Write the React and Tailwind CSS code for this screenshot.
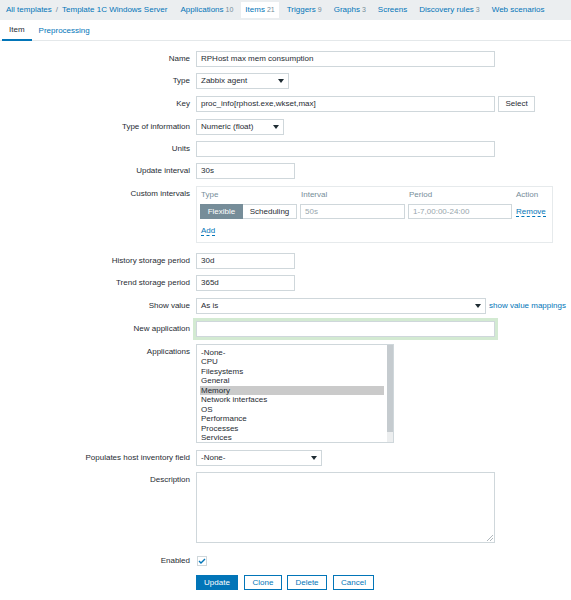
import React from 'react';

const navItems = [
  { label: 'Applications', count: '10' },
  { label: 'Items', count: '21', active: true },
  { label: 'Triggers', count: '9' },
  { label: 'Graphs', count: '3' },
  { label: 'Screens' },
  { label: 'Discovery rules', count: '3' },
  { label: 'Web scenarios' },
];

const apps = [
  '-None-',
  'CPU',
  'Filesystems',
  'General',
  'Memory',
  'Network interfaces',
  'OS',
  'Performance',
  'Processes',
  'Services',
];

function Caret() {
  return (
    <svg width="6" height="4" viewBox="0 0 6 4" className="shrink-0">
      <path d="M0 0h6L3 4z" fill="#1f2c33" />
    </svg>
  );
}

function Field({ className = '', children, muted }) {
  return (
    <div
      className={`flex h-[16px] items-center border border-[#cfd7db] bg-white pl-[4px] ${
        muted ? 'text-[#98a6ad]' : 'text-[#1f2c33]'
      } ${className}`}
    >
      {children}
    </div>
  );
}

function Select({ className = '', children }) {
  return (
    <div
      className={`flex h-[16px] items-center justify-between border border-[#cfd7db] bg-white pl-[4px] pr-[4px] text-[#1f2c33] ${className}`}
    >
      <span>{children}</span>
      <Caret />
    </div>
  );
}

function Row({ label, className = '', top, children }) {
  return (
    <div className={`flex ${className}`}>
      <div
        className={`w-[190px] shrink-0 text-right text-[#1f2c33] ${
          top ? top : 'flex h-[16px] items-center justify-end'
        }`}
      >
        {label}
      </div>
      <div className="ml-[6px] flex items-start">{children}</div>
    </div>
  );
}

export default function App() {
  return (
    <div className="h-[600px] w-[571px] overflow-hidden bg-white text-[8px] font-['Liberation_Sans',Arial,sans-serif] text-[#1f2c33]">
      {/* header navigation */}
      <div className="flex h-[20px] items-center bg-[#ebeef0] pl-[6px]">
        <span className="text-[#0275b8]">All templates</span>
        <span className="mx-[4px] text-[#768d99]">/</span>
        <span className="text-[#0275b8]">Template 1C Windows Server</span>
        <div className="ml-[9px] flex items-center gap-[4px]">
          {navItems.map((n) => (
            <div
              key={n.label}
              className={`flex h-[16px] items-center px-[4px] ${n.active ? 'bg-white' : ''}`}
            >
              <span className="text-[#0275b8]">{n.label}</span>
              {n.count && <span className="ml-[2px] text-[7px] text-[#768d99]">{n.count}</span>}
            </div>
          ))}
        </div>
      </div>

      {/* tabs */}
      <div className="flex h-[21px] border-b border-[#e4e8ea] pl-[2px]">
        <div className="-mb-px flex items-center border-b-2 border-[#0275b8] px-[7px] pt-[1px] text-[#1f2c33]">
          Item
        </div>
        <div className="flex items-center px-[7px] pt-[1px] text-[#0275b8]">Preprocessing</div>
      </div>

      {/* form */}
      <div className="pt-[10px]">
        <Row label="Name">
          <Field className="w-[299px]">RPHost max mem consumption</Field>
        </Row>
        <Row label="Type" className="mt-[6px]">
          <Select className="w-[93px]">Zabbix agent</Select>
        </Row>
        <Row label="Key" className="mt-[7px]">
          <Field className="w-[299px]">proc_info[rphost.exe,wkset,max]</Field>
          <div className="ml-[3px] flex h-[16px] w-[37px] items-center justify-center border border-[#cfd7db] bg-white text-[#1f2c33]">
            Select
          </div>
        </Row>
        <Row label="Type of information" className="mt-[7px]">
          <Select className="w-[88px]">Numeric (float)</Select>
        </Row>
        <Row label="Units" className="mt-[6px]">
          <Field className="w-[299px]" />
        </Row>
        <Row label="Update interval" className="mt-[6px]">
          <Field className="w-[99px]">30s</Field>
        </Row>
        <Row label="Custom intervals" className="mt-[7px]" top="pt-[2px] leading-[12px]">
          <div className="w-[357px] border border-[#e6eaec] pb-[5px] pl-[3px] pr-[3px] pt-[2px]">
            <div className="grid h-[12px] grid-cols-[97px_105px_104px_1fr] gap-x-[3px] leading-[12px] text-[#768d99]">
              <span className="pl-[1px]">Type</span>
              <span className="pl-[1px]">Interval</span>
              <span className="pl-[1px]">Period</span>
              <span className="pl-[1px]">Action</span>
            </div>
            <div className="mt-[3px] grid h-[15px] grid-cols-[97px_105px_104px_1fr] gap-x-[3px]">
              <div className="flex">
                <div className="flex w-[43px] items-center justify-center border border-[#768d99] bg-[#768d99] text-white">
                  Flexible
                </div>
                <div className="flex w-[54px] items-center justify-center border border-l-0 border-[#cfd7db] bg-white text-[#1f2c33]">
                  Scheduling
                </div>
              </div>
              <div className="flex items-center border border-[#cfd7db] pl-[4px] text-[#98a6ad]">50s</div>
              <div className="flex items-center border border-[#cfd7db] pl-[4px] text-[#98a6ad]">
                1-7,00:00-24:00
              </div>
              <div className="flex items-center pl-[1px]">
                <span className="border-b border-dashed border-[#0275b8] leading-[9px] text-[#0275b8]">Remove</span>
              </div>
            </div>
            <div className="mt-[6px] flex h-[12px] items-center pl-[1px]">
              <span className="border-b border-dashed border-[#0275b8] leading-[9px] text-[#0275b8]">Add</span>
            </div>
          </div>
        </Row>
        <Row label="History storage period" className="mt-[10px]">
          <Field className="w-[99px]">30d</Field>
        </Row>
        <Row label="Trend storage period" className="mt-[6px]">
          <Field className="w-[99px]">365d</Field>
        </Row>
        <Row label="Show value" className="mt-[7px]">
          <Select className="w-[290px]">As is</Select>
          <span className="ml-[3px] flex h-[16px] items-center text-[#0275b8]">show value mappings</span>
        </Row>
        <Row label="New application" className="mt-[7px]">
          <Field className="w-[299px] shadow-[0_0_0_3px_#d3ead2]" />
        </Row>
        <Row label="Applications" className="mt-[7px]" top="pt-[3px] leading-[9.45px]">
          <div className="flex h-[99px] w-[198px] border border-[#cfd7db] bg-white">
            <div className="flex-1 pl-[3px] pr-[3px] pt-[3px] leading-[9.45px] text-[#1f2c33]">
              {apps.map((a) => (
                <div key={a} className={`pl-[1px] ${a === 'Memory' ? 'bg-[#cacaca]' : ''}`}>
                  {a}
                </div>
              ))}
            </div>
            <div className="flex w-[6px] flex-col bg-[#eceeef]">
              <div className="h-[87px] bg-[#c5cbcf]" />
            </div>
          </div>
        </Row>
        <Row label="Populates host inventory field" className="mt-[7px]">
          <Select className="w-[126px]">-None-</Select>
        </Row>
        <Row label="Description" className="mt-[6px]" top="pt-[3px] leading-[10px]">
          <div className="relative h-[71px] w-[299px] border border-[#cfd7db] bg-white">
            <svg width="6" height="6" viewBox="0 0 6 6" className="absolute bottom-[1px] right-[1px]">
              <path d="M6 0L0 6M6 3L3 6" stroke="#9aa5ab" strokeWidth="0.8" />
            </svg>
          </div>
        </Row>
        <div className="mt-[13px] flex">
          <div className="flex h-[10px] w-[190px] items-center justify-end">Enabled</div>
          <div className="ml-[7px] flex h-[10px] w-[10px] items-center justify-center border border-[#cfd7db] bg-white">
            <svg width="8" height="6" viewBox="0 0 8 6">
              <path d="M1 3l2 2 4-4" fill="none" stroke="#0275b8" strokeWidth="1.4" />
            </svg>
          </div>
        </div>
        <div className="ml-[196px] mt-[9px] flex">
          <div className="flex h-[15px] w-[42px] items-center justify-center border border-[#0275b8] bg-[#0275b8] text-white">
            Update
          </div>
          <div className="ml-[6px] flex h-[15px] w-[38px] items-center justify-center border border-[#0275b8] bg-white text-[#0275b8]">
            Clone
          </div>
          <div className="ml-[5px] flex h-[15px] w-[40px] items-center justify-center border border-[#0275b8] bg-white text-[#0275b8]">
            Delete
          </div>
          <div className="ml-[6px] flex h-[15px] w-[41px] items-center justify-center border border-[#0275b8] bg-white text-[#0275b8]">
            Cancel
          </div>
        </div>
      </div>
    </div>
  );
}
